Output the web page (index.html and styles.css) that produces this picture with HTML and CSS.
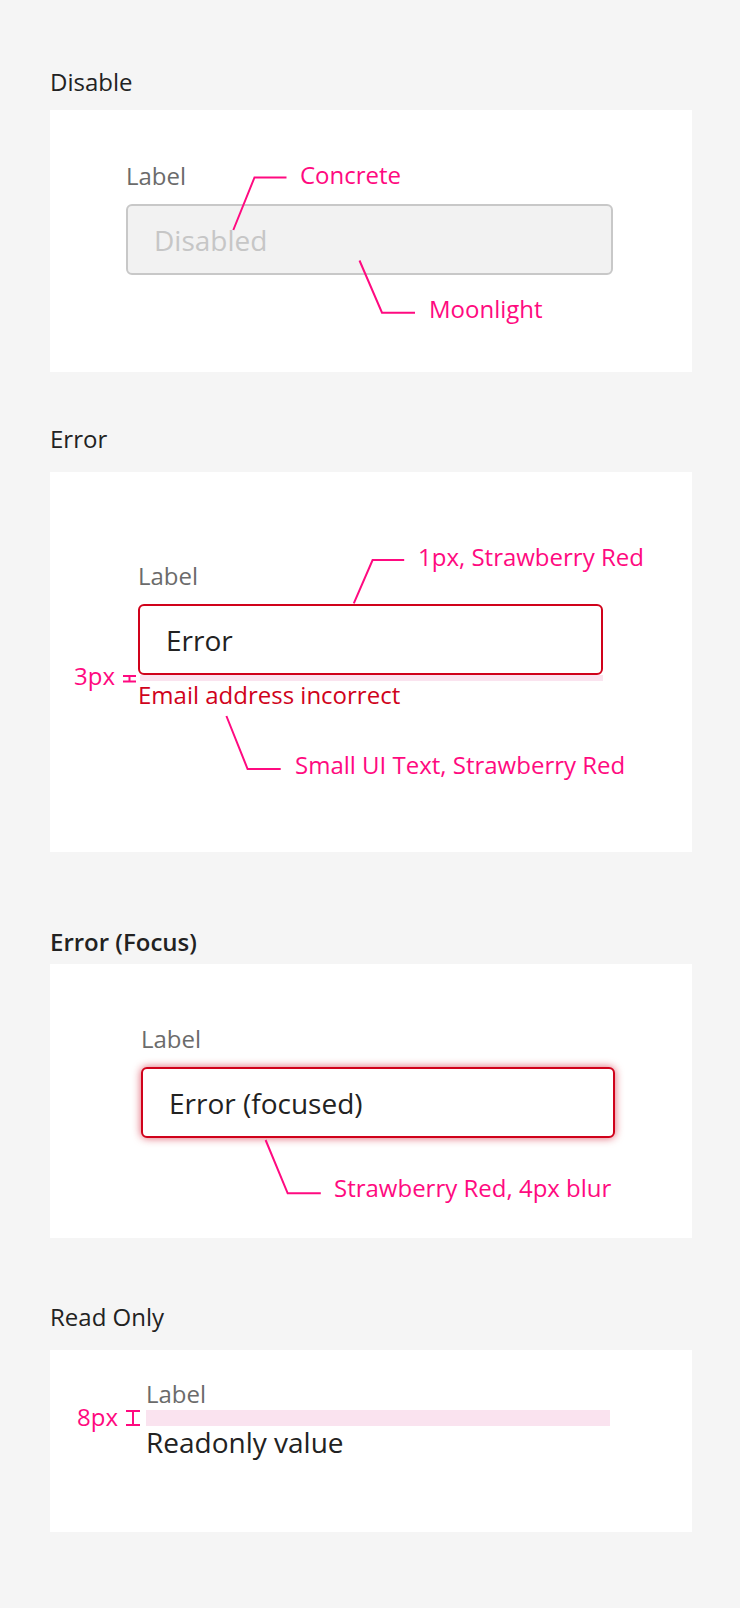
FILE: index.html
```html
<!DOCTYPE html>
<html lang="en">
<head>
<meta charset="utf-8">
<title>Text field states</title>
<link rel="stylesheet" href="styles.css">
</head>
<body>
<main class="page">

  <section class="sec sec-disabled">
    <h2 class="sec-title">Disable</h2>
    <div class="card card-disabled">
      <div class="field">
        <div class="label">Label</div>
        <div class="input input-disabled">Disabled</div>
      </div>
      <svg class="notes" width="642" height="262" viewBox="0 0 642 262">
        <polyline points="183.3,120 204.5,67.5 236.5,67.5"/>
        <polyline points="309.5,150.5 332,202.7 365,202.7"/>
      </svg>
      <span class="note note-concrete">Concrete</span>
      <span class="note note-moonlight">Moonlight</span>
    </div>
  </section>

  <section class="sec sec-error">
    <h2 class="sec-title">Error</h2>
    <div class="card card-error">
      <div class="field">
        <div class="label">Label</div>
        <div class="input input-error">Error</div>
        <div class="gap-mark gap-mark-3"></div>
        <div class="error-msg">Email address incorrect</div>
      </div>
      <svg class="notes" width="642" height="380" viewBox="0 0 642 380">
        <polyline points="303.8,131.3 322.6,88 354.2,88"/>
        <polyline points="176.4,244 197.6,297 230.7,297"/>
        <line x1="73" y1="204" x2="86" y2="204"/>
        <line x1="73" y1="209.5" x2="86" y2="209.5"/>
        <line x1="79.5" y1="204" x2="79.5" y2="209.5"/>
      </svg>
      <span class="note note-1px">1px, Strawberry Red</span>
      <span class="note note-small">Small UI Text, Strawberry Red</span>
      <span class="note note-3px">3px</span>
    </div>
  </section>

  <section class="sec sec-focus">
    <h2 class="sec-title sec-title-strong">Error (Focus)</h2>
    <div class="card card-focus">
      <div class="field">
        <div class="label">Label</div>
        <div class="input input-error input-focus">Error (focused)</div>
      </div>
      <svg class="notes" width="642" height="274" viewBox="0 0 642 274">
        <polyline points="215.6,176 237.7,229.3 270.8,229.3"/>
      </svg>
      <span class="note note-blur">Strawberry Red, 4px blur</span>
    </div>
  </section>

  <section class="sec sec-readonly">
    <h2 class="sec-title">Read Only</h2>
    <div class="card card-readonly">
      <div class="field">
        <div class="label label-tight">Label</div>
        <div class="gap-mark gap-mark-8"></div>
        <div class="readonly-value">Readonly value</div>
      </div>
      <svg class="notes" width="642" height="182" viewBox="0 0 642 182">
        <line x1="76" y1="61" x2="90" y2="61"/>
        <line x1="76" y1="75" x2="90" y2="75"/>
        <line x1="83" y1="61" x2="83" y2="75"/>
      </svg>
      <span class="note note-8px">8px</span>
    </div>
  </section>

</main>
</body>
</html>
```

FILE: styles.css
```css
html, body {
  margin: 0;
  padding: 0;
  background: #f5f5f5;
}

body {
  font-family: "Open Sans", "Noto Sans", "Liberation Sans", sans-serif;
  color: #222222;
}

.page {
  width: 740px;
  padding: 66px 0 0 50px;
  box-sizing: border-box;
  min-height: 1608px;
}

.sec-title {
  margin: 0;
  font-size: 24px;
  line-height: 32px;
  font-weight: 400;
  color: #222222;
}

.sec-title-strong {
  font-weight: 600;
}

.card {
  position: relative;
  width: 642px;
  background: #ffffff;
  box-sizing: border-box;
}

/* section spacing */
.sec-disabled .sec-title { margin-bottom: 12px; }
.sec-error { margin-top: 51px; }
.sec-error .sec-title { margin-bottom: 17px; }
.sec-focus { margin-top: 74px; }
.sec-focus .sec-title { margin-bottom: 6px; }
.sec-readonly { margin-top: 63px; }
.sec-readonly .sec-title { margin-bottom: 17px; }

.card-disabled { height: 262px; padding: 50px 0 0 76px; }
.card-error    { height: 380px; padding: 88px 0 0 88px; }
.card-focus    { height: 274px; padding: 59px 0 0 91px; }
.card-readonly { height: 182px; padding: 28px 0 0 96px; }

.card-disabled .field { width: 487px; }
.card-error .field    { width: 465px; }
.card-focus .field    { width: 474px; }
.card-readonly .field { width: 464px; }

.field {
  display: flex;
  flex-direction: column;
}

.label {
  font-size: 24px;
  line-height: 32px;
  color: #6b6b6b;
  margin-bottom: 12px;
}

.label-tight {
  margin-bottom: 0;
}

.input {
  height: 71px;
  box-sizing: border-box;
  border: 2px solid #c8c8c8;
  border-radius: 6px;
  padding: 0 26px;
  display: flex;
  align-items: center;
  font-size: 28px;
  line-height: 38px;
  color: #222222;
  background: #ffffff;
}

.input-disabled {
  background: #f2f2f2;
  border-color: #c8c8c8;
  color: #c6c6c6;
}

.input-error {
  border-color: #d0021b;
}

.input-focus {
  box-shadow: 0 0 8px rgba(208, 2, 27, 0.65);
}

.gap-mark {
  background: #fae3ef;
}

.gap-mark-3 {
  height: 6px;
  margin-left: 2px;
}

.gap-mark-8 {
  height: 16px;
}

.error-msg {
  font-size: 24px;
  line-height: 28px;
  color: #d0021b;
}

.readonly-value {
  font-size: 28px;
  line-height: 32px;
  color: #222222;
}

/* annotation overlay */
.notes {
  position: absolute;
  left: 0;
  top: 0;
  pointer-events: none;
  overflow: visible;
}

.notes polyline,
.notes line {
  fill: none;
  stroke: #ff0a80;
  stroke-width: 2;
}

.note {
  position: absolute;
  font-size: 24px;
  line-height: 32px;
  color: #ff0a80;
  white-space: nowrap;
}

.note-concrete  { left: 250px; top: 49px; }
.note-moonlight { left: 379px; top: 183px; }
.note-1px       { left: 368px; top: 69px; }
.note-small     { left: 245px; top: 277px; }
.note-3px       { left: 24px;  top: 188px; }
.note-blur      { left: 284px; top: 208px; }
.note-8px       { left: 27px;  top: 51px; }
```
